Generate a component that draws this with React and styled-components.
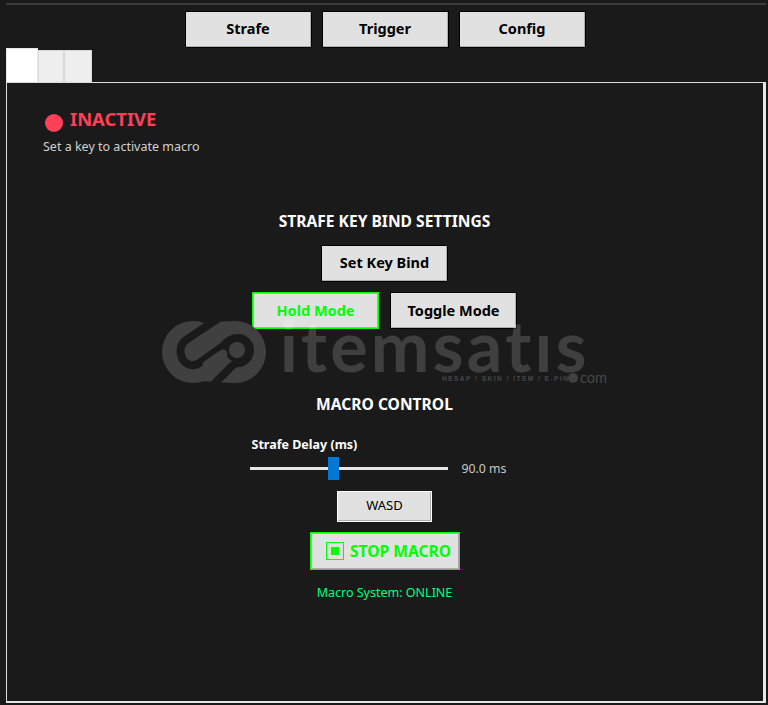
import React from 'react';
import styled, { createGlobalStyle } from 'styled-components';

const GlobalStyle = createGlobalStyle`
    html, body {
        margin: 0;
        padding: 0;
        height: 705px;
        overflow: hidden;
        background-color: #1a1a1a;
        font-family: "Noto Sans", "Open Sans", sans-serif;
    }
`;

const Window = styled.div`
    width: 768px;
    height: 705px;
    box-sizing: border-box;
    padding: 3px 2px 0 6px;
    display: flex;
    flex-direction: column;
    position: relative;
    overflow: hidden;
`;

const TopLine = styled.div`
    height: 2px;
    background-color: #3c3c3c;
    flex-shrink: 0;
`;

const TopBar = styled.div`
    display: flex;
    justify-content: center;
    gap: 10px;
    margin-top: 6px;
    padding-right: 2px;
    height: 37px;
    flex-shrink: 0;
`;

const Button = styled.button`
    box-sizing: border-box;
    width: ${p => p.$width || 127}px;
    height: ${p => p.$height || 37}px;
    padding: 0 0 3px;
    background-color: #e1e1e1;
    border: 1px solid ${p => p.$active ? '#00ff00' : p.$light ? '#ffffff' : '#000000'};
    box-shadow: inset -1px -1px 0 #adadad, inset 1px 1px 0 ${p => p.$active ? '#adadad' : '#e1e1e1'};
    color: ${p => p.$active ? '#00ff00' : '#000000'};
    font-family: inherit;
    font-size: ${p => p.$size || 14.5}px;
    font-weight: ${p => p.$regular ? 400 : 700};
    display: flex;
    align-items: center;
    justify-content: center;
    gap: 6px;
`;

const ModeButton = styled(Button)`
    padding-bottom: 1px;
`;

const StopButton = styled(Button)`
    padding: 0 0 1px 8px;
`;

const TabRow = styled.div`
    display: flex;
    align-items: flex-end;
    height: 34px;
    flex-shrink: 0;
`;

const Tab = styled.div`
    box-sizing: border-box;
    width: ${p => p.$width}px;
    height: ${p => p.$selected ? 34 : 32}px;
    background-color: ${p => p.$selected ? '#ffffff' : '#eeeeee'};
    border: 1px solid ${p => p.$selected ? '#e8e8e8' : '#d9d9d9'};
    border-bottom: none;
`;

const Panel = styled.div`
    box-sizing: border-box;
    height: 621px;
    flex-shrink: 0;
    border-top: 1px solid #dcdcdc;
    border-left: 1px solid #dcdcdc;
    border-right: 3px solid #e6e6e6;
    border-bottom: 2px solid #e6e6e6;
    padding: 21px 0 0 36px;
    display: flex;
    flex-direction: column;
`;

const StatusRow = styled.div`
    display: flex;
    align-items: center;
    gap: 7px;
    height: 28px;
    padding-left: 2px;
`;

const StatusDot = styled.span`
    width: 18px;
    height: 18px;
    margin-top: 10px;
    border-radius: 50%;
    background-color: #ff4057;
`;

const StatusText = styled.span`
    color: #ff4057;
    font-size: 18.4px;
    font-weight: 700;
`;

const Hint = styled.div`
    color: #d0d0d0;
    font-size: 12.5px;
    line-height: 16px;
    margin-top: 7px;
`;

const Content = styled.div`
    display: flex;
    flex-direction: column;
    align-items: center;
    margin-left: -36px;
    padding-right: 1px;
    margin-top: 56px;
`;

const SectionTitle = styled.div`
    color: #ffffff;
    font-size: 15.6px;
    font-weight: 700;
    line-height: 20px;
`;

const Row = styled.div`
    display: flex;
    gap: 11px;
`;

const KeyBindSpot = styled.div`
    margin: 14px 0 10px;
`;

const ControlTitle = styled(SectionTitle)`
    margin-top: 65px;
`;

const SliderBlock = styled.div`
    width: 270px;
    margin-top: 22px;
`;

const SliderLabel = styled.div`
    color: #ffffff;
    font-size: 12.5px;
    font-weight: 700;
    line-height: 18px;
    padding-left: 2px;
`;

const SliderRow = styled.div`
    display: flex;
    align-items: center;
    gap: 14px;
    margin-top: 5px;
`;

const Track = styled.div`
    width: 198px;
    height: 3px;
    background-color: #e6e6e6;
    position: relative;
`;

const Thumb = styled.div`
    position: absolute;
    left: 78px;
    top: -10px;
    width: 11px;
    height: 23px;
    background-color: #0078d7;
`;

const SliderValue = styled.span`
    color: #c8c8c8;
    font-size: 12.3px;
    line-height: 16px;
    padding-top: 2px;
`;

const WasdSpot = styled.div`
    margin-top: 14px;
`;

const StopSpot = styled.div`
    margin-top: 10px;
`;

const StopIcon = styled.span`
    box-sizing: border-box;
    width: 18px;
    height: 18px;
    margin-top: 1px;
    border: 1px solid #00ff00;
    display: flex;
    align-items: center;
    justify-content: center;

    &::after {
        content: '';
        width: 8px;
        height: 8px;
        background-color: #00ff00;
    }
`;

const SystemStatus = styled.div`
    color: #00ff7f;
    font-size: 12.5px;
    line-height: 18px;
    margin-top: 14px;
`;

const Watermark = styled.div`
    position: absolute;
    left: 162px;
    top: 321px;
    width: 450px;
    height: 66px;
    pointer-events: none;
`;

const LogoMark = styled.svg`
    position: absolute;
    left: 0;
    top: 0;
`;

const WatermarkName = styled.span`
    position: absolute;
    left: 118px;
    top: 4px;
    color: rgba(255, 255, 255, 0.166);
    font-family: Lato, sans-serif;
    font-weight: 700;
    font-size: 70px;
    line-height: 40px;
    letter-spacing: 3.3px;
`;

const WatermarkTag = styled.span`
    position: absolute;
    left: 280px;
    top: 53px;
    color: #474747;
    font-family: "Liberation Sans", sans-serif;
    font-size: 6.5px;
    font-weight: 700;
    letter-spacing: 1.5px;
    line-height: 10px;
    white-space: nowrap;
`;

const WatermarkDot = styled.span`
    position: absolute;
    left: 406px;
    top: 52px;
    width: 10px;
    height: 10px;
    border-radius: 50%;
    background-color: #404040;
`;

const WatermarkCom = styled.span`
    position: absolute;
    left: 418px;
    top: 48px;
    color: #474747;
    font-family: Lato, sans-serif;
    font-size: 14.5px;
    line-height: 18px;
`;

function Logo() {
    return <LogoMark width="105" height="63" viewBox="7 6 105 63">
        <circle cx="38" cy="37" r="31" fill="#404040" />
        <circle cx="80" cy="37" r="31" fill="#404040" />
        <polygon points="45,8 75,6 75,68 45,66" fill="#404040" />
        <path d="M64 3 L31 25 C23 31 24 45 33 49 C37 51 42 50 46 47 L68 31 C72 26 77 23 83 23 C90 23 95 29 95 35 C95 42 90 48 83 48 C80 48 78 50 76 52 L58 70" fill="none" stroke="#1a1a1a" strokeWidth="8" />
        <circle cx="82" cy="35" r="12" fill="#1a1a1a" />
        <circle cx="82" cy="35" r="8" fill="#404040" />
        <path d="M52 50 L68 39" stroke="#404040" strokeWidth="9" strokeLinecap="round" />
    </LogoMark>;
}

export default function App() {
    return <Window>
        <GlobalStyle />
        <TopLine />
        <TopBar>
            <Button>Strafe</Button>
            <Button>Trigger</Button>
            <Button>Config</Button>
        </TopBar>
        <TabRow>
            <Tab $width={32} $selected />
            <Tab $width={26} />
            <Tab $width={28} />
        </TabRow>
        <Panel>
            <StatusRow>
                <StatusDot />
                <StatusText>INACTIVE</StatusText>
            </StatusRow>
            <Hint>Set a key to activate macro</Hint>
            <Content>
                <SectionTitle>STRAFE KEY BIND SETTINGS</SectionTitle>
                <KeyBindSpot>
                    <Button>Set Key Bind</Button>
                </KeyBindSpot>
                <Row>
                    <ModeButton $active>Hold Mode</ModeButton>
                    <ModeButton>Toggle Mode</ModeButton>
                </Row>
                <ControlTitle>MACRO CONTROL</ControlTitle>
                <SliderBlock>
                    <SliderLabel>Strafe Delay (ms)</SliderLabel>
                    <SliderRow>
                        <Track><Thumb /></Track>
                        <SliderValue>90.0 ms</SliderValue>
                    </SliderRow>
                </SliderBlock>
                <WasdSpot>
                    <Button $width={95} $height={31} $light $regular $size={13}>WASD</Button>
                </WasdSpot>
                <StopSpot>
                    <StopButton $width={150} $height={38} $active $size={15.6}>
                        <StopIcon />
                        STOP MACRO
                    </StopButton>
                </StopSpot>
                <SystemStatus>Macro System: ONLINE</SystemStatus>
            </Content>
        </Panel>
        <Watermark>
            <Logo />
            <WatermarkName>itemsatıs</WatermarkName>
            <WatermarkTag>HESAP / SKIN / ITEM / E-PIN</WatermarkTag>
            <WatermarkDot />
            <WatermarkCom>com</WatermarkCom>
        </Watermark>
    </Window>;
}
